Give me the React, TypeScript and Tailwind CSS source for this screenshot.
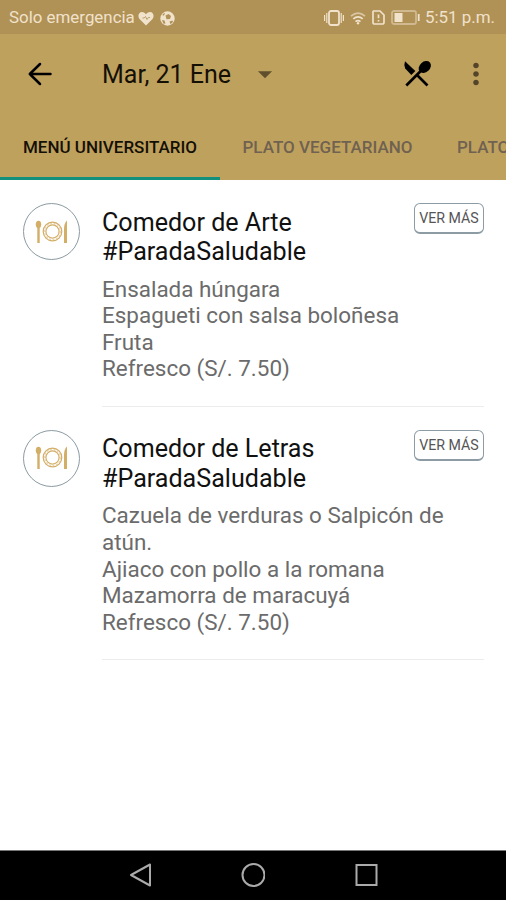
import { MdArrowDropDown, MdMoreVert } from "react-icons/md";

interface Menu {
  place: string;
  tag: string;
  lines: string[];
}

const menus: Menu[] = [
  {
    place: "Comedor de Arte",
    tag: "#ParadaSaludable",
    lines: ["Ensalada húngara", "Espagueti con salsa boloñesa", "Fruta", "Refresco (S/. 7.50)"],
  },
  {
    place: "Comedor de Letras",
    tag: "#ParadaSaludable",
    lines: [
      "Cazuela de verduras o Salpicón de",
      "atún.",
      "Ajiaco con pollo a la romana",
      "Mazamorra de maracuyá",
      "Refresco (S/. 7.50)",
    ],
  },
];

function StatusBar() {
  return (
    <div className="flex h-[34px] items-center bg-[#b09156] pt-[2px] pr-[11px] pl-[9px] text-[16.9px] text-[#f0e2cb]">
      <span className="whitespace-nowrap">Solo emergencia</span>
      <svg className="ml-[3px] h-[15px] w-4" viewBox="0 0 16 15">
        <path d="M8 14.5 1.5 8C-.7 5.300.6 1 4 1c1.800 0 3.200 1 4 2.300C8.800 2 10.200 1 12 1c3.400 0 4.700 4.300 2.500 7z" fill="currentColor" />
        <path d="M4.500 7h1.700l1.300-1.500 1.500 3 1.300-2h1.700" fill="none" stroke="#b09156" strokeWidth=".8" />
      </svg>
      <svg className="ml-[6px] h-[15px] w-[15px]" viewBox="0 0 15 15">
        <circle cx="7.500" cy="7.500" r="7.200" fill="currentColor" />
        <path d="m5.500 4.500 3-1.500 2.500 2-1 3-3.500.2zM2 9l2.500.5 1 3-2 .3zM9.500 10.500l3-1 .5 1.500-2.500 2.300zM2.500 3.500 4.500 2l.5 1-2 2z" fill="#b09156" />
      </svg>
      <div className="ml-auto flex items-center">
        <svg className="h-4 w-5" viewBox="0 0 20 16" fill="none" stroke="currentColor">
          <rect x="5" y="1" width="10" height="14" rx="2" strokeWidth="1.800" />
          <path d="M2.800 3v10M17.200 3v10M.6 5v6M19.400 5v6" strokeWidth="1.200" />
        </svg>
        <svg className="ml-[6px] h-[14px] w-4" viewBox="0 0 16 14" fill="none" stroke="currentColor" strokeWidth="1.800">
          <path d="M1 5.200Q8-1 15 5.200" opacity=".65" />
          <path d="M3.300 7.900q4.700-4 9.400 0M5.500 10.600q2.500-2 5 0" />
          <circle cx="8" cy="12.300" r="1.200" fill="currentColor" stroke="none" />
        </svg>
        <svg className="ml-[6px] h-[15px] w-[13px]" viewBox="0 0 13 15" fill="none" stroke="currentColor" strokeWidth="1.700">
          <path d="M1.500 1h6.500l4 4v7.500a1.500 1.500 0 0 1-1.500 1.500h-8A1.500 1.500 0 0 1 1 12.500V1.500z" />
          <path d="M6.500 4.500v3.800M6.500 10v1.600" />
        </svg>
        <svg className="ml-[6px] h-[15px] w-[29px]" viewBox="0 0 29 15">
          <rect x="1" y="1" width="24" height="13" rx="2" fill="none" stroke="currentColor" strokeWidth="1.800" opacity=".5" />
          <rect x="3.500" y="3" width="8" height="9" fill="currentColor" />
          <path d="M27.700 4v7" stroke="currentColor" strokeWidth="1.800" />
        </svg>
        <span className="ml-[5px] w-[70px] whitespace-nowrap">5:51 p.m.</span>
      </div>
    </div>
  );
}

function Toolbar() {
  return (
    <div className="flex h-[79px] items-center pl-[23px] text-black">
      <svg className="h-[34px] w-[34px]" viewBox="0 0 34 34" fill="none" stroke="currentColor" strokeWidth="2.500" strokeLinecap="round" strokeLinejoin="round">
        <path d="M27.500 17H6.800M17 7 6.800 17 17 27" />
      </svg>
      <h1 className="ml-[45px] pt-[2px] text-[25px] whitespace-nowrap text-[#151006]">Mar, 21 Ene</h1>
      <MdArrowDropDown className="ml-[17px] h-[34px] w-[34px] text-[#5f4f2c]" />
      {/* crossed knife and spoon */}
      <svg className="ml-auto h-[34px] w-[34px]" viewBox="0 0 34 34" fill="currentColor">
        <path d="M5 4.200 15.300 14l-4 4L5.200 11.500Q3.500 8 5 4.200z" />
        <ellipse cx="24.800" cy="10" rx="6.800" ry="5.200" transform="rotate(-42 24.800 10)" />
        <path d="M21.500 13.300 6.300 28.500M17 18l10.500 10.500" fill="none" stroke="currentColor" strokeWidth="2.700" />
      </svg>
      <MdMoreVert className="mr-[13px] ml-[25px] h-[34px] w-[34px] text-[#54452a]" />
    </div>
  );
}

function Tabs() {
  return (
    <div className="flex h-[67px] overflow-hidden text-[17px] font-medium whitespace-nowrap text-[#706250]">
      <div className="flex w-[220px] shrink-0 items-center justify-center border-b-[3px] border-[#13907d] pt-[5px] text-[#151006]">
        MENÚ UNIVERSITARIO
      </div>
      <div className="flex w-[215px] shrink-0 items-center justify-center pt-[2px]">PLATO VEGETARIANO</div>
      <div className="flex shrink-0 items-center pt-[2px] pl-[22px]">PLATO</div>
    </div>
  );
}

function PlateIcon() {
  return (
    <svg className="h-6 w-[34px]" viewBox="0 0 34 24" fill="none" stroke="#d3ae67">
      <ellipse cx="3.500" cy="4.500" rx="2.700" ry="3.700" fill="#d3ae67" stroke="none" />
      <path d="M3.500 7v16" strokeWidth="2.400" />
      <circle cx="17.500" cy="11.500" r="9.300" strokeWidth="1.200" />
      <circle cx="17.500" cy="11.500" r="8" strokeWidth="1.200" strokeDasharray="2 1.500" opacity=".5" />
      <circle cx="17.500" cy="11.500" r="6.600" strokeWidth="1.200" />
      <path d="M32 .5V23h-3V9q0-6 3-8.500z" fill="#d3ae67" stroke="none" />
    </svg>
  );
}

function MenuItem({ menu }: { menu: Menu }) {
  return (
    <div className="flex pt-[23px] pl-[23px]">
      <div className="flex h-[57px] w-[57px] shrink-0 items-center justify-center rounded-full border border-[#8b9ba2]">
        <PlateIcon />
      </div>
      <div className="ml-[22px] w-[382px] border-b border-[#ececec] pb-[24px]">
        <div className="flex items-start justify-between">
          <h2 className="pt-[4.500px] text-[25.1px] leading-[29.500px] text-[#111]">
            {menu.place}
            <br />
            {menu.tag}
          </h2>
          <button className="h-[31px] w-[70px] rounded-[6px] border border-b-2 border-[#8d9ca4] pt-[2px] text-[14.2px] whitespace-nowrap text-[#555]">
            VER MÁS
          </button>
        </div>
        <div className="mt-[9px] text-[22.450px] leading-[26.600px] text-[#6b6b6b]">
          {menu.lines.map((line) => (
            <p key={line} className="whitespace-nowrap">{line}</p>
          ))}
        </div>
      </div>
    </div>
  );
}

export default function App() {
  return (
    <div className="flex h-[900px] w-[506px] flex-col overflow-hidden bg-white font-['Roboto',sans-serif]">
      <StatusBar />
      <header className="bg-[#bfa15e]">
        <Toolbar />
        <Tabs />
      </header>
      <main className="flex-1">
        {menus.map((menu) => (
          <MenuItem key={menu.place} menu={menu} />
        ))}
      </main>
      <nav className="flex h-[50px] items-center justify-center gap-[89px] border-t border-[#777] bg-black pb-px text-[#aaa]">
        <svg className="h-6 w-6" viewBox="0 0 24 24" fill="none" stroke="currentColor" strokeWidth="2">
          <path d="M22 1.500v21L3 12z" strokeLinejoin="round" />
        </svg>
        <svg className="h-6 w-6" viewBox="0 0 24 24" fill="none" stroke="currentColor" strokeWidth="2">
          <circle cx="12.500" cy="12" r="11" />
        </svg>
        <svg className="h-6 w-6" viewBox="0 0 24 24" fill="none" stroke="currentColor" strokeWidth="2">
          <rect x="2.500" y="2" width="20" height="20" />
        </svg>
      </nav>
    </div>
  );
}
